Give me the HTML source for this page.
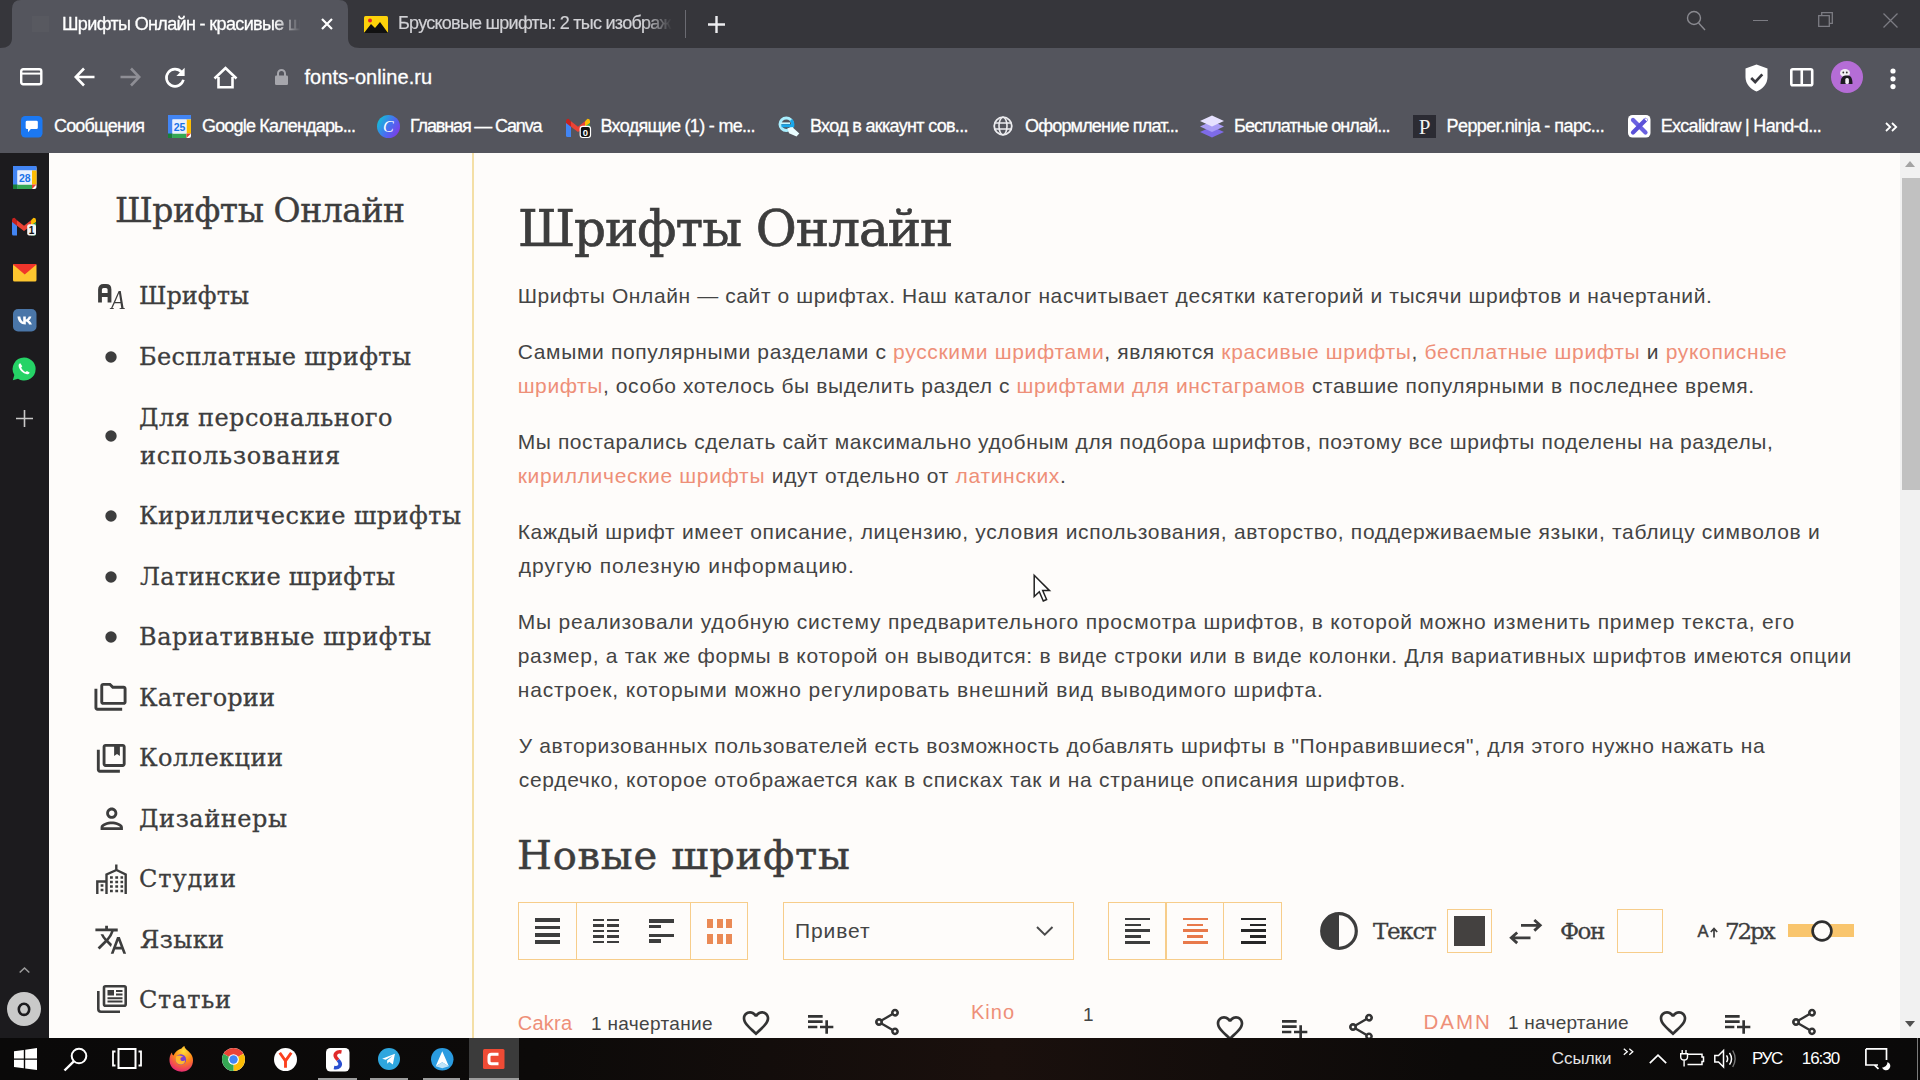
<!DOCTYPE html>
<html lang="ru"><head><meta charset="utf-8"><title>Шрифты Онлайн</title>
<style>
html,body{margin:0;padding:0;}
body{width:1920px;height:1080px;overflow:hidden;position:relative;background:#fefcfa;font-family:"Liberation Sans",sans-serif;}
.a{position:absolute;}
.t{position:absolute;white-space:nowrap;line-height:1.2;}
.t a{color:#ee8f78;text-decoration:none;}
.bm{display:inline-block;width:0;height:0;}
svg{position:absolute;overflow:visible;}

</style></head>
<body>
<!-- ===== browser chrome ===== -->
<div class="a" style="left:0px;top:0px;width:1920px;height:48px;background:#36363b;"></div>
<svg style="left:0px;top:0px;" width="362" height="48" viewBox="0 0 362 48"><path fill="#54555d" d="M0 48 Q12 48 12 38 L12 9 Q12 0 21 0 L339 0 Q348 0 348 9 L348 38 Q348 48 360 48 Z"/></svg>
<div class="a" style="left:32px;top:16px;width:16.5px;height:15.5px;background:rgba(255,255,255,0.022);"></div>
<div class="a" style="left:0px;top:48px;width:1920px;height:105px;background:#54555d;"></div>
<svg style="left:321px;top:18px;" width="12" height="12" viewBox="0 0 12 12"><path d="M1 1 L11 11 M11 1 L1 11" stroke="#fff" stroke-width="2.2" fill="none"/></svg>
<svg style="left:364px;top:16px;" width="24" height="17" viewBox="0 0 24 17"><rect width="24" height="17" rx="1.5" fill="#fdd20a"/><path d="M0 17 L7 8 L11 12 L16 6 L24 17 Z" fill="#111"/><circle cx="6" cy="4.5" r="2" fill="#e8222b"/></svg>
<div class="a" style="left:684.5px;top:10px;width:1.5px;height:28px;background:#6b6b72;"></div>
<svg style="left:708px;top:16px;" width="17" height="17" viewBox="0 0 17 17"><path d="M8.500 0 V17 M0 8.500 H17" stroke="#ededf0" stroke-width="2.4" fill="none"/></svg>
<svg style="left:1685px;top:9px;" width="22" height="24" viewBox="0 0 22 24"><circle cx="9" cy="9" r="6.500" stroke="#8a8a90" stroke-width="1.400" fill="none"/><path d="M13.600 14 L20 21" stroke="#8a8a90" stroke-width="1.400"/></svg>
<div class="a" style="left:1753px;top:19.5px;width:15px;height:1.5px;background:#7c7c83;"></div>
<svg style="left:1818px;top:12px;" width="15" height="15" viewBox="0 0 15 15"><path d="M0.700 3.700 H11.300 V14.300 H0.700 Z M3.700 3.700 V0.700 H14.300 V11.300 H11.300" stroke="#7c7c83" stroke-width="1.300" fill="none"/></svg>
<svg style="left:1882.5px;top:12.5px;" width="15" height="15" viewBox="0 0 15 15"><path d="M0.500 0.500 L14.500 14.500 M14.500 0.500 L0.500 14.500" stroke="#7c7c83" stroke-width="1.300" fill="none"/></svg>
<svg style="left:20px;top:67.5px;" width="22.5" height="17.5" viewBox="0 0 22.5 17.5"><rect x="1.200" y="1.200" width="20.100" height="15.100" rx="2" stroke="#fff" stroke-width="2.400" fill="none"/><path d="M1.200 5.600 H21.300" stroke="#fff" stroke-width="2"/></svg>
<svg style="left:74px;top:67px;" width="21" height="20" viewBox="0 0 21 20"><path d="M10 1.500 L1.800 10 L10 18.500 M2.500 10 H20.500" stroke="#fff" stroke-width="2.600" fill="none"/></svg>
<svg style="left:120px;top:67px;" width="21" height="20" viewBox="0 0 21 20"><path d="M11 1.500 L19.200 10 L11 18.500 M18.500 10 H0.500" stroke="#8e8e95" stroke-width="2.600" fill="none"/></svg>
<svg style="left:164px;top:66.5px;" width="22" height="21" viewBox="0 0 22 21"><path d="M17.600 5.200 A8.600 8.600 0 1 0 19.400 12.800" stroke="#fff" stroke-width="2.600" fill="none"/><path d="M20.600 0.800 V9 H12.400 Z" fill="#fff"/></svg>
<svg style="left:213px;top:66px;" width="25" height="23" viewBox="0 0 25 23"><path d="M1.500 12.500 L12.500 2 L23.500 12.500 M5.500 11 V21.300 H19.500 V11" stroke="#fff" stroke-width="2.600" fill="none" stroke-linejoin="miter"/></svg>
<svg style="left:274.5px;top:69px;" width="13" height="16" viewBox="0 0 13 16"><rect x="0" y="6.500" width="13" height="9.500" rx="1.300" fill="#a6a6ac"/><path d="M3 7 V4.500 A3.500 3.500 0 0 1 10 4.500 V7" stroke="#a6a6ac" stroke-width="2" fill="none"/></svg>
<svg style="left:1745px;top:64px;" width="23" height="28" viewBox="0 0 23 28"><path d="M11.500 0.500 L22.500 4.500 V13 C22.500 20 17.500 25.200 11.500 27.500 C5.500 25.200 0.500 20 0.500 13 V4.500 Z" fill="#fff"/><path d="M6.200 14 L10.200 18 L17.300 10.300" stroke="#3a3a40" stroke-width="2.600" fill="none"/></svg>
<svg style="left:1790px;top:67.5px;" width="23.5" height="18.5" viewBox="0 0 23.5 18.5"><rect x="1.300" y="1.300" width="20.900" height="15.900" rx="1.500" stroke="#fff" stroke-width="2.600" fill="none"/><path d="M11.750 1 V17.500" stroke="#fff" stroke-width="2.600"/></svg>
<svg style="left:1831px;top:61px;" width="32" height="32" viewBox="0 0 32 32"><circle cx="16" cy="16" r="16" fill="#b56dd6"/><ellipse cx="14" cy="12" rx="5" ry="4" fill="#f3eef5"/><path d="M9.500 23 C9.500 16 12 14.500 16 14.500 C20 14.500 21.500 17 21.500 23 Z" fill="#1d1b22"/><rect x="14.300" y="17" width="3.600" height="6" rx="1.500" fill="#f3eef5"/><circle cx="12.300" cy="11.500" r="0.900" fill="#333"/><circle cx="15.800" cy="11.500" r="0.900" fill="#333"/></svg>
<svg style="left:1889.5px;top:67.5px;" width="6" height="22" viewBox="0 0 6 22"><circle cx="3" cy="3" r="2.600" fill="#fff"/><circle cx="3" cy="10.800" r="2.600" fill="#fff"/><circle cx="3" cy="18.600" r="2.600" fill="#fff"/></svg>
<svg style="left:20.5px;top:115.5px;" width="21.5" height="21.5" viewBox="0 0 23 23"><rect width="23" height="23" rx="4.500" fill="#1b78f2"/><path d="M5 6.500 Q5 5 6.500 5 H16.500 Q18 5 18 6.500 V12.500 Q18 14 16.500 14 H10.500 L7.500 17.500 V14 H6.500 Q5 14 5 12.500 Z" fill="#fff"/></svg>
<svg style="left:167.5px;top:115px;" width="23" height="23" viewBox="0 0 23 23"><rect width="23" height="23" rx="2" fill="#fff"/><rect width="23" height="4.500" fill="#4285f4"/><rect width="4.500" height="23" fill="#4285f4"/><rect x="18.500" y="4.500" width="4.500" height="14" fill="#fbbc04"/><rect x="4.500" y="18.500" width="14" height="4.500" fill="#34a853"/><rect x="0" y="18.500" width="4.500" height="4.500" fill="#188038"/><path d="M18.500 18.500 H23 L18.500 23 Z" fill="#ea4335"/><rect x="4.500" y="4.500" width="14" height="14" fill="#e8f0fe"/><text x="11.500" y="15.500" font-size="10.500" font-weight="700" text-anchor="middle" fill="#1a73e8" font-family="Liberation Sans, sans-serif">25</text></svg>
<svg style="left:377px;top:114.500px" width="23" height="23" viewBox="0 0 23 23"><defs><linearGradient id="cv" x1="0" y1="0.200" x2="1" y2="0.800"><stop offset="0" stop-color="#0fc4d6"/><stop offset="0.550" stop-color="#4a6cf0"/><stop offset="1" stop-color="#8436e8"/></linearGradient></defs><circle cx="11.500" cy="11.500" r="11.500" fill="url(#cv)"/><text x="11.300" y="17" font-size="16" font-style="italic" text-anchor="middle" fill="#fff" font-family="Liberation Serif, serif">C</text></svg>
<svg style="left:566px;top:118px;" width="25" height="19.5" viewBox="0 0 25 19.5"><path d="M0 3 V17.500 Q0 19 1.500 19 H5 V8.500 Z" fill="#4285f4"/><path d="M0 3 Q0 0.800 2.500 0.800 L5 3.300 V8.700 L0 5 Z" fill="#c5221f"/><path d="M5 3.300 L12 8.700 L19 3.300 V8.700 L12 14 L5 8.700 Z" fill="#ea4335"/><path d="M19 3.300 L21.500 0.800 Q24 0.800 24 3 V5 L19 8.700 Z" fill="#fbbc04"/><path d="M19 8.700 L24 5 V17.500 Q24 19 22.500 19 H19 Z" fill="#34a853"/><rect x="14.200" y="8.300" width="10.300" height="11.200" rx="2.400" fill="#111" stroke="#fff" stroke-width="1.200"/><text x="19.350" y="17.700" font-size="9.500" font-weight="700" text-anchor="middle" fill="#fff" font-family="Liberation Sans, sans-serif">0</text></svg>
<svg style="left:777px;top:115px;" width="23" height="22" viewBox="0 0 23 22"><circle cx="9.300" cy="9.200" r="6.300" stroke="#a9efff" stroke-width="3" fill="none"/><path d="M4.500 10.800 H15.800 Q16.300 7.500 14 5" stroke="#18a7ea" stroke-width="3" fill="none"/><path d="M3.500 8.200 H13" stroke="#c9f7ff" stroke-width="1.600"/><path d="M10.500 13.300 L15.500 12.300 L22.300 18.500 L19.500 21.500 L12 18.300 Z" fill="#eafdff"/></svg>
<svg style="left:992.5px;top:116px;" width="20" height="20" viewBox="0 0 20 20"><circle cx="10" cy="10" r="8.800" stroke="#ececef" stroke-width="1.800" fill="none"/><ellipse cx="10" cy="10" rx="4" ry="8.800" stroke="#ececef" stroke-width="1.600" fill="none"/><path d="M1.500 7 H18.500 M1.500 13 H18.500" stroke="#ececef" stroke-width="1.600"/></svg>
<svg style="left:1200px;top:115px;" width="24" height="23" viewBox="0 0 24 23"><path d="M12 9.500 L24 15 L12 20.500 L0 15 Z" fill="#7e6be8" transform="translate(0,2)"/><path d="M12 6 L24 11.500 L12 17 L0 11.500 Z" fill="#a99cf5"/><path d="M12 0.500 L24 6 L12 11.500 L0 6 Z" fill="#e6e1ff"/></svg>
<svg style="left:1413px;top:115px;" width="23" height="23" viewBox="0 0 23 23"><rect width="23" height="23" fill="#2b2b33"/><text x="11.500" y="19" font-size="21" text-anchor="middle" fill="#f2f2f2" font-family="Liberation Serif, serif">P</text></svg>
<svg style="left:1627.5px;top:115px;" width="22.5" height="22.5" viewBox="0 0 22.5 22.5"><rect width="22.500" height="22.500" rx="4.500" fill="#fff"/><path d="M5 5 L17.500 17.500" stroke="#6a61e0" stroke-width="4.200" stroke-linecap="round"/><path d="M17.500 5 L5 17.500" stroke="#5a50d8" stroke-width="4.200" stroke-linecap="round"/><path d="M16 3.500 L19 3.500 L19 6.500 Z" fill="#fff"/></svg>
<svg style="left:1885px;top:122px;" width="13" height="10" viewBox="0 0 13 10"><path d="M1 1 L5.200 5 L1 9 M7 1 L11.200 5 L7 9" stroke="#fff" stroke-width="1.800" fill="none"/></svg><!-- ===== page ===== -->
<div class="a" style="left:0px;top:153px;width:49px;height:885px;background:#1c1b1e;"></div>
<div class="a" style="left:49px;top:153px;width:1851px;height:885px;background:#fefcfa;"></div>
<div class="a" style="left:472px;top:153px;width:1.5px;height:885px;background:#f4dfa6;"></div>
<div class="a" style="left:1900px;top:153px;width:20px;height:885px;background:#f1f1f1;"></div>
<div class="a" style="left:1902px;top:177.5px;width:18px;height:312px;background:#c1c1c1;"></div>
<svg style="left:1905px;top:161px;" width="10" height="6" viewBox="0 0 10 6"><path d="M0 6 L5 0 L10 6 Z" fill="#a3a3a3"/></svg>
<svg style="left:1905px;top:1021px;" width="10" height="6" viewBox="0 0 10 6"><path d="M0 0 L5 6 L10 0 Z" fill="#505050"/></svg>
<svg style="left:12.5px;top:166px;" width="23.5" height="23" viewBox="0 0 23.5 23"><rect width="23.500" height="23" rx="2" fill="#fff"/><rect width="23.500" height="4.500" fill="#4285f4"/><rect width="4.500" height="23" fill="#4285f4"/><rect x="19" y="4.500" width="4.500" height="14" fill="#fbbc04"/><rect x="4.500" y="18.500" width="14.500" height="4.500" fill="#34a853"/><rect y="18.500" width="4.500" height="4.500" fill="#188038"/><path d="M19 18.500 H23.500 L19 23 Z" fill="#ea4335"/><rect x="4.500" y="4.500" width="14.500" height="14" fill="#e8f0fe"/><text x="11.750" y="15.500" font-size="10.500" font-weight="700" text-anchor="middle" fill="#1a73e8" font-family="Liberation Sans, sans-serif">28</text></svg>
<svg style="left:12px;top:216.5px;" width="24" height="18.5" viewBox="0 0 24 18.5"><path d="M0 3 V17 Q0 18.500 1.500 18.500 H5 V8.500 Z" fill="#4285f4"/><path d="M0 3 Q0 0.800 2.500 0.800 L5 3.300 V8.700 L0 5 Z" fill="#c5221f"/><path d="M5 3.300 L12 8.700 L19 3.300 V8.700 L12 14 L5 8.700 Z" fill="#ea4335"/><path d="M19 3.300 L21.500 0.800 Q24 0.800 24 3 V5 L19 8.700 Z" fill="#fbbc04"/><path d="M19 8.700 L24 5 V17 Q24 18.500 22.500 18.500 H19 Z" fill="#34a853"/><rect x="15.200" y="7.300" width="8.800" height="11.200" rx="2" fill="#f4f4f4"/><text x="19.600" y="16.700" font-size="10" font-weight="700" text-anchor="middle" fill="#111" font-family="Liberation Sans, sans-serif">1</text></svg>
<svg style="left:12.5px;top:264px;" width="23.5" height="17.5" viewBox="0 0 23.5 17.5"><rect width="23.500" height="17.500" rx="1.500" fill="#fdc62f"/><path d="M0 0.500 L11.750 10.500 L23.500 0.500 V0 H0 Z" fill="#f0352b"/></svg>
<svg style="left:12.5px;top:309px;" width="23.5" height="22.5" viewBox="0 0 23.5 22.5"><rect width="23.500" height="22.500" rx="5" fill="#4a76a8"/><path d="M4.500 7.500 H7.300 C7.600 10.500 9 12.300 10.200 12.700 V7.500 H12.800 V10.600 C14 10.400 15.300 9 15.800 7.500 H18.400 C18 9.400 16.600 11 15.700 11.600 C16.600 12.100 18.200 13.400 18.900 15.500 H16 C15.500 14 14.200 12.800 12.800 12.600 V15.500 H12.400 C7.800 15.500 4.800 12.400 4.500 7.500 Z" fill="#fff"/></svg>
<svg style="left:12px;top:357px;" width="24" height="24" viewBox="0 0 24 24"><path d="M12 0.500 A11.500 11.500 0 1 1 6 21.700 L0.800 23.200 L2.300 18 A11.500 11.500 0 0 1 12 0.500 Z" fill="#25d366"/><path d="M8.300 6.300 C7.500 6.300 6.500 7.300 6.600 8.800 C6.800 12.500 11 16.800 15 17.200 C16.300 17.300 17.500 16.300 17.600 15.400 L14.900 13.900 L13.700 15 C12 14.400 9.800 12.200 9.200 10.400 L10.300 9.300 Z" fill="#fff"/></svg>
<svg style="left:15.5px;top:409.5px;" width="17" height="17" viewBox="0 0 17 17"><path d="M8.500 0 V17 M0 8.500 H17" stroke="#c9c9c9" stroke-width="1.600" fill="none"/></svg>
<svg style="left:18.5px;top:967px;" width="11" height="6" viewBox="0 0 11 6"><path d="M0.700 5.500 L5.500 1 L10.300 5.500" stroke="#9b9b9b" stroke-width="1.600" fill="none"/></svg>
<svg style="left:7px;top:991.5px;" width="34" height="34" viewBox="0 0 34 34"><circle cx="17" cy="17" r="17" fill="#c9c9c9"/><ellipse cx="17" cy="17.300" rx="5.200" ry="5.600" stroke="#1c1b1e" stroke-width="2.600" fill="none"/></svg>
<svg style="left:98px;top:284px;" width="13.5" height="18.5" viewBox="0 0 13.5 18.5"><path d="M2 18.500 V5.500 Q2 2 5.500 2 H8 Q11.500 2 11.500 5.500 V18.500 M2 11 H11.500" stroke="#3d3d3d" stroke-width="3.800" fill="none"/></svg>
<svg style="left:105px;top:351px;" width="12" height="12" viewBox="0 0 12 12"><circle cx="6" cy="6" r="5.700" fill="#3d3d3d"/></svg>
<svg style="left:105px;top:430px;" width="12" height="12" viewBox="0 0 12 12"><circle cx="6" cy="6" r="5.700" fill="#3d3d3d"/></svg>
<svg style="left:105px;top:510px;" width="12" height="12" viewBox="0 0 12 12"><circle cx="6" cy="6" r="5.700" fill="#3d3d3d"/></svg>
<svg style="left:105px;top:571px;" width="12" height="12" viewBox="0 0 12 12"><circle cx="6" cy="6" r="5.700" fill="#3d3d3d"/></svg>
<svg style="left:105px;top:631px;" width="12" height="12" viewBox="0 0 12 12"><circle cx="6" cy="6" r="5.700" fill="#3d3d3d"/></svg>
<svg style="left:93.3px;top:680.0px;" width="35" height="35" viewBox="0 0 24 24"><path fill="#3d3d3d" d="M3 19h17v2H3c-1.100 0-2-.9-2-2V6h2v13zM23 6v9c0 1.100-.9 2-2 2H7c-1.100 0-2-.9-2-2l.01-11c0-1.100.89-2 1.990-2h5l2 2h7c1.100 0 2 .9 2 2zM7 15h14V6h-7.830l-2-2H7v11z"/></svg>
<svg style="left:93.75px;top:740.75px;" width="34.5" height="34.5" viewBox="0 0 24 24"><path fill="#3d3d3d" d="M4 6H2v14c0 1.100.9 2 2 2h14v-2H4V6zM20 2H8c-1.100 0-2 .9-2 2v12c0 1.100.9 2 2 2h12c1.100 0 2-.9 2-2V4c0-1.100-.9-2-2-2zm0 14H8V4h6v6.500l2-1.500 2 1.500V4h2v12z"/></svg>
<svg style="left:94.95px;top:802.05px;" width="33.5" height="33.5" viewBox="0 0 24 24"><path fill="#3d3d3d" d="M12 6c1.100 0 2 .9 2 2s-.9 2-2 2-2-.9-2-2 .9-2 2-2m0 10c2.700 0 5.800 1.290 6 2H6c.23-.72 3.310-2 6-2m0-12C9.790 4 8 5.790 8 8s1.790 4 4 4 4-1.790 4-4-1.790-4-4-4zm0 10c-2.670 0-8 1.340-8 4v2h16v-2c0-2.660-5.330-4-8-4z"/></svg>
<svg style="left:94.25px;top:922.75px;" width="33.5" height="33.5" viewBox="0 0 24 24"><path fill="#3d3d3d" d="M12.870 15.070l-2.540-2.510.03-.03A17.520 17.520 0 0 0 14.070 6H17V4h-7V2H8v2H1v1.990h11.170C11.500 7.920 10.440 9.750 9 11.350 8.070 10.320 7.300 9.190 6.690 8h-2c.73 1.630 1.730 3.170 2.980 4.560l-5.090 5.020L4 19l5-5 3.110 3.110.76-2.040zM18.500 10h-2L12 22h2l1.120-3h4.750L21 22h2l-4.500-12zm-2.620 7l1.620-4.330L19.120 17h-3.240z"/></svg>
<svg style="left:96px;top:864px;" width="31" height="31" viewBox="0 0 31 31"><path d="M1.300 30 V17.500 H10.500 V30 M10.500 30 V10.500 L20.500 6 L29.700 10.500 V30 M20.300 6 V0.500" stroke="#3d3d3d" stroke-width="2.400" fill="none"/><path d="M4.600 21.500 h2.800 M4.600 26 h2.800 M14 13.500 h2.800 M14 18 h2.800 M14 22.500 h2.800 M14 27 h2.800 M19.300 13.500 h2.800 M19.300 18 h2.800 M19.300 22.500 h2.800 M19.300 27 h2.800 M24.500 13.500 h2.600 M24.500 18 h2.600 M24.500 22.500 h2.600 M24.500 27 h2.600" stroke="#3d3d3d" stroke-width="2.400"/></svg>
<svg style="left:97px;top:985px;" width="30" height="28" viewBox="0 0 30 28"><path d="M1.300 6 V24 Q1.300 26.700 4 26.700 H23" stroke="#3d3d3d" stroke-width="2.600" fill="none"/><rect x="7" y="1.300" width="21.700" height="19.400" rx="1.500" stroke="#3d3d3d" stroke-width="2.600" fill="none"/><rect x="10.500" y="5" width="6.500" height="5.500" fill="#3d3d3d"/><path d="M19 6 H25.500 M19 9.500 H25.500 M10.500 13.200 H25.500 M10.500 16.600 H25.500" stroke="#3d3d3d" stroke-width="2"/></svg>
<div class="a" style="left:517.5px;top:901.5px;width:230.5px;height:58px;border:1.4px solid #f7cd8a;box-sizing:border-box"></div>
<div class="a" style="left:575.5px;top:902px;width:1.4px;height:57px;background:#f7cd8a;"></div>
<div class="a" style="left:689.5px;top:902px;width:1.4px;height:57px;background:#f7cd8a;"></div>
<div class="a" style="left:535px;top:918px;width:25px;height:3.5px;background:#3d3d3d;"></div>
<div class="a" style="left:535px;top:925.5px;width:25px;height:3.5px;background:#3d3d3d;"></div>
<div class="a" style="left:535px;top:933px;width:25px;height:3.5px;background:#3d3d3d;"></div>
<div class="a" style="left:535px;top:940.3px;width:25px;height:3.5px;background:#3d3d3d;"></div>
<div class="a" style="left:592.5px;top:918.6px;width:11.5px;height:2.6px;background:#3d3d3d;"></div>
<div class="a" style="left:607px;top:918.6px;width:11.5px;height:2.6px;background:#3d3d3d;"></div>
<div class="a" style="left:592.5px;top:924px;width:11.5px;height:2.6px;background:#3d3d3d;"></div>
<div class="a" style="left:607px;top:924px;width:11.5px;height:2.6px;background:#3d3d3d;"></div>
<div class="a" style="left:592.5px;top:929.6px;width:11.5px;height:2.6px;background:#3d3d3d;"></div>
<div class="a" style="left:607px;top:929.6px;width:11.5px;height:2.6px;background:#3d3d3d;"></div>
<div class="a" style="left:592.5px;top:935.2px;width:11.5px;height:2.6px;background:#3d3d3d;"></div>
<div class="a" style="left:607px;top:935.2px;width:11.5px;height:2.6px;background:#3d3d3d;"></div>
<div class="a" style="left:592.5px;top:940.8px;width:11.5px;height:2.6px;background:#3d3d3d;"></div>
<div class="a" style="left:607px;top:940.8px;width:11.5px;height:2.6px;background:#3d3d3d;"></div>
<div class="a" style="left:649px;top:919.2px;width:25px;height:3.7px;background:#3d3d3d;"></div>
<div class="a" style="left:649px;top:924.9px;width:12.3px;height:3.5px;background:#3d3d3d;"></div>
<div class="a" style="left:649px;top:933.6px;width:25px;height:3.6px;background:#3d3d3d;"></div>
<div class="a" style="left:649px;top:939.3px;width:12.3px;height:3.5px;background:#3d3d3d;"></div>
<div class="a" style="left:707px;top:918.6px;width:6px;height:9.5px;background:#ea8a55;"></div>
<div class="a" style="left:707px;top:933.6px;width:6px;height:10px;background:#ea8a55;"></div>
<div class="a" style="left:716.5px;top:918.6px;width:6px;height:9.5px;background:#ea8a55;"></div>
<div class="a" style="left:716.5px;top:933.6px;width:6px;height:10px;background:#ea8a55;"></div>
<div class="a" style="left:726px;top:918.6px;width:6px;height:9.5px;background:#ea8a55;"></div>
<div class="a" style="left:726px;top:933.6px;width:6px;height:10px;background:#ea8a55;"></div>
<div class="a" style="left:782.5px;top:901.5px;width:291px;height:58px;border:1.4px solid #f7cd8a;box-sizing:border-box"></div>
<svg style="left:1036px;top:926px;" width="17.5" height="10" viewBox="0 0 17.5 10"><path d="M1 1 L8.750 8.600 L16.500 1" stroke="#4a4a4a" stroke-width="2" fill="none"/></svg>
<div class="a" style="left:1107.5px;top:901.5px;width:174.5px;height:58px;border:1.4px solid #f7cd8a;box-sizing:border-box"></div>
<div class="a" style="left:1165.3px;top:902px;width:1.4px;height:57px;background:#f7cd8a;"></div>
<div class="a" style="left:1223px;top:902px;width:1.4px;height:57px;background:#f7cd8a;"></div>
<div class="a" style="left:1124.8px;top:917.6px;width:25px;height:2.5px;background:#3d3d3d;"></div>
<div class="a" style="left:1182.5px;top:917.6px;width:25px;height:2.5px;background:#e8794a;"></div>
<div class="a" style="left:1240.5px;top:917.6px;width:25px;height:2.5px;background:#262626;"></div>
<div class="a" style="left:1124.8px;top:923.5px;width:16px;height:2.5px;background:#3d3d3d;"></div>
<div class="a" style="left:1187.0px;top:923.5px;width:16px;height:2.5px;background:#e8794a;"></div>
<div class="a" style="left:1249.5px;top:923.5px;width:16px;height:2.5px;background:#262626;"></div>
<div class="a" style="left:1124.8px;top:929.4px;width:25px;height:2.5px;background:#3d3d3d;"></div>
<div class="a" style="left:1182.5px;top:929.4px;width:25px;height:2.5px;background:#e8794a;"></div>
<div class="a" style="left:1240.5px;top:929.4px;width:25px;height:2.5px;background:#262626;"></div>
<div class="a" style="left:1124.8px;top:935.2px;width:16px;height:2.5px;background:#3d3d3d;"></div>
<div class="a" style="left:1187.0px;top:935.2px;width:16px;height:2.5px;background:#e8794a;"></div>
<div class="a" style="left:1249.5px;top:935.2px;width:16px;height:2.5px;background:#262626;"></div>
<div class="a" style="left:1124.8px;top:941px;width:25px;height:2.5px;background:#3d3d3d;"></div>
<div class="a" style="left:1182.5px;top:941px;width:25px;height:2.5px;background:#e8794a;"></div>
<div class="a" style="left:1240.5px;top:941px;width:25px;height:2.5px;background:#262626;"></div>
<svg style="left:1319.5px;top:911.8px;" width="38" height="38" viewBox="0 0 38 38"><circle cx="19" cy="19" r="17.300" stroke="#3d3d3d" stroke-width="3.200" fill="none"/><path d="M19 1.700 A17.300 17.300 0 0 0 19 36.300 Z" fill="#3d3d3d"/></svg>
<div class="a" style="left:1447px;top:908.5px;width:44.8px;height:44.5px;border:1.4px solid #f7cd8a;box-sizing:border-box"></div>
<div class="a" style="left:1454.3px;top:915.7px;width:30.5px;height:30.5px;background:#444140;"></div>
<svg style="left:1509px;top:918.5px;" width="33.5" height="25.5" viewBox="0 0 33.5 25.5"><path d="M12 6.300 H31 M25.300 1 L31.200 6.300 L25.300 11.600" stroke="#3d3d3d" stroke-width="2.800" fill="none"/><path d="M21.500 18.800 H2.500 M8.200 13.500 L2.300 18.800 L8.200 24.100" stroke="#3d3d3d" stroke-width="2.800" fill="none"/></svg>
<div class="a" style="left:1617px;top:908.5px;width:45.5px;height:44.5px;border:1.4px solid #f7cd8a;box-sizing:border-box"></div>
<svg style="left:1710px;top:927px;" width="8" height="11" viewBox="0 0 8 11"><path d="M4 10.500 V1.500 M0.800 5 L4 1.500 L7.200 5" stroke="#3d3d3d" stroke-width="1.700" fill="none"/></svg>
<div class="a" style="left:1788px;top:924.3px;width:65.5px;height:12.4px;background:#f9c56d;"></div>
<svg style="left:1811px;top:919.7px;" width="22" height="22" viewBox="0 0 22 22"><circle cx="11" cy="11" r="9.400" fill="#fefcfa" stroke="#2e2e2e" stroke-width="2.700"/></svg>
<svg style="left:740.0px;top:1006.5px;" width="32" height="32" viewBox="0 0 24 24"><path fill="#333" d="M16.500 3c-1.740 0-3.410.81-4.500 2.090C10.910 3.810 9.240 3 7.500 3 4.420 3 2 5.420 2 8.500c0 3.780 3.400 6.860 8.550 11.540L12 21.350l1.450-1.320C18.600 15.360 22 12.280 22 8.500 22 5.420 19.580 3 16.500 3zm-4.400 15.550l-.1.100-.1-.1C7.140 14.240 4 11.390 4 8.500 4 6.500 5.500 5 7.500 5c1.540 0 3.040.99 3.570 2.360h1.870C13.460 5.990 14.960 5 16.500 5c2 0 3.500 1.500 3.500 3.500 0 2.890-3.140 5.740-7.900 10.050z"/></svg>
<svg style="left:804.4px;top:1006.5px;" width="32" height="32" viewBox="0 0 24 24"><path fill="#333" d="M14 10H3v2h11v-2zm0-4H3v2h11V6zm4 8v-4h-2v4h-4v2h4v4h2v-4h4v-2h-4zM3 16h7v-2H3v2z"/></svg>
<svg style="left:871.2px;top:1006.0px;" width="32" height="32" viewBox="0 0 24 24"><path fill="#333" d="M18 16.080c-.76 0-1.440.3-1.960.77L8.910 12.700c.05-.23.090-.46.090-.7s-.04-.47-.09-.7l7.050-4.110c.54.5 1.250.81 2.040.81 1.660 0 3-1.340 3-3s-1.340-3-3-3-3 1.340-3 3c0 .24.04.47.09.7L8.040 9.810C7.500 9.310 6.790 9 6 9c-1.660 0-3 1.340-3 3s1.340 3 3 3c.79 0 1.500-.31 2.040-.81l7.120 4.160c-.05.21-.08.43-.08.650 0 1.610 1.310 2.920 2.920 2.920s2.920-1.310 2.920-2.920c0-1.610-1.310-2.920-2.920-2.920zM18 4c.55 0 1 .45 1 1s-.45 1-1 1-1-.45-1-1 .45-1 1-1zM6 13c-.55 0-1-.45-1-1s.45-1 1-1 1 .45 1 1-.45 1-1 1zm12 7.020c-.55 0-1-.45-1-1s.45-1 1-1 1 .45 1 1-.45 1-1 1z"/></svg>
<svg style="left:1214.0px;top:1011.5px;" width="32" height="32" viewBox="0 0 24 24"><path fill="#333" d="M16.500 3c-1.740 0-3.410.81-4.500 2.090C10.910 3.810 9.240 3 7.500 3 4.420 3 2 5.420 2 8.500c0 3.780 3.400 6.860 8.550 11.540L12 21.350l1.450-1.320C18.600 15.360 22 12.280 22 8.500 22 5.420 19.580 3 16.500 3zm-4.400 15.550l-.1.100-.1-.1C7.140 14.240 4 11.390 4 8.500 4 6.500 5.500 5 7.500 5c1.540 0 3.040.99 3.570 2.360h1.870C13.460 5.990 14.960 5 16.500 5c2 0 3.500 1.500 3.500 3.500 0 2.890-3.140 5.740-7.900 10.050z"/></svg>
<svg style="left:1278.4px;top:1011.5px;" width="32" height="32" viewBox="0 0 24 24"><path fill="#333" d="M14 10H3v2h11v-2zm0-4H3v2h11V6zm4 8v-4h-2v4h-4v2h4v4h2v-4h4v-2h-4zM3 16h7v-2H3v2z"/></svg>
<svg style="left:1345.2px;top:1011.0px;" width="32" height="32" viewBox="0 0 24 24"><path fill="#333" d="M18 16.080c-.76 0-1.440.3-1.960.77L8.910 12.700c.05-.23.090-.46.090-.7s-.04-.47-.09-.7l7.050-4.110c.54.5 1.250.81 2.040.81 1.660 0 3-1.340 3-3s-1.340-3-3-3-3 1.340-3 3c0 .24.04.47.09.7L8.040 9.810C7.500 9.310 6.790 9 6 9c-1.660 0-3 1.340-3 3s1.340 3 3 3c.79 0 1.500-.31 2.040-.81l7.120 4.160c-.05.21-.08.43-.08.650 0 1.610 1.310 2.920 2.920 2.920s2.920-1.310 2.920-2.920c0-1.610-1.310-2.920-2.920-2.920zM18 4c.55 0 1 .45 1 1s-.45 1-1 1-1-.45-1-1 .45-1 1-1zM6 13c-.55 0-1-.45-1-1s.45-1 1-1 1 .45 1 1-.45 1-1 1zm12 7.020c-.55 0-1-.45-1-1s.45-1 1-1 1 .45 1 1-.45 1-1 1z"/></svg>
<svg style="left:1656.5px;top:1006.5px;" width="32" height="32" viewBox="0 0 24 24"><path fill="#333" d="M16.500 3c-1.740 0-3.410.81-4.500 2.090C10.910 3.810 9.240 3 7.500 3 4.420 3 2 5.420 2 8.500c0 3.780 3.400 6.860 8.550 11.540L12 21.350l1.450-1.320C18.600 15.360 22 12.280 22 8.500 22 5.420 19.580 3 16.500 3zm-4.400 15.550l-.1.100-.1-.1C7.140 14.240 4 11.390 4 8.500 4 6.500 5.500 5 7.500 5c1.540 0 3.040.99 3.570 2.360h1.870C13.460 5.990 14.960 5 16.500 5c2 0 3.500 1.500 3.500 3.500 0 2.890-3.140 5.740-7.900 10.050z"/></svg>
<svg style="left:1720.9px;top:1006.5px;" width="32" height="32" viewBox="0 0 24 24"><path fill="#333" d="M14 10H3v2h11v-2zm0-4H3v2h11V6zm4 8v-4h-2v4h-4v2h4v4h2v-4h4v-2h-4zM3 16h7v-2H3v2z"/></svg>
<svg style="left:1787.7px;top:1006.0px;" width="32" height="32" viewBox="0 0 24 24"><path fill="#333" d="M18 16.080c-.76 0-1.440.3-1.960.77L8.910 12.700c.05-.23.090-.46.090-.7s-.04-.47-.09-.7l7.050-4.110c.54.5 1.250.81 2.040.81 1.660 0 3-1.340 3-3s-1.340-3-3-3-3 1.340-3 3c0 .24.04.47.09.7L8.040 9.810C7.500 9.310 6.790 9 6 9c-1.660 0-3 1.340-3 3s1.340 3 3 3c.79 0 1.500-.31 2.040-.81l7.120 4.160c-.05.21-.08.43-.08.650 0 1.610 1.310 2.920 2.920 2.920s2.920-1.310 2.920-2.920c0-1.610-1.310-2.920-2.920-2.920zM18 4c.55 0 1 .45 1 1s-.45 1-1 1-1-.45-1-1 .45-1 1-1zM6 13c-.55 0-1-.45-1-1s.45-1 1-1 1 .45 1 1-.45 1-1 1zm12 7.020c-.55 0-1-.45-1-1s.45-1 1-1 1 .45 1 1-.45 1-1 1z"/></svg>
<svg style="left:1033px;top:574px;" width="19" height="29" viewBox="0 0 19 29"><path d="M1.200 1.200 V22.500 L6.300 17.800 L10.300 27 L13.600 25.500 L9.700 16.600 H16.500 Z" fill="#fff" stroke="#222" stroke-width="1.500" stroke-linejoin="miter"/></svg>
<div class="t" style="font-family:'DejaVu Serif', 'Liberation Serif', serif;font-size:50px;color:#3d3d3d;font-weight:400;left:518.0px;top:198.5px;letter-spacing:-1.007px;-webkit-text-stroke:0.7px #3d3d3d;">Шрифты Онлайн</div>
<div class="t" style="font-family:'Liberation Sans', sans-serif;font-size:21px;color:#444;font-weight:400;left:517.7px;top:282.5px;letter-spacing:0.603px;">Шрифты Онлайн — сайт о шрифтах. Наш каталог насчитывает десятки категорий и тысячи шрифтов и начертаний.</div>
<div class="t" style="font-family:'Liberation Sans', sans-serif;font-size:21px;color:#444;font-weight:400;left:517.7px;top:338.5px;letter-spacing:0.663px;">Самыми популярными разделами с <a>русскими шрифтами</a>, являются <a>красивые шрифты</a>, <a>бесплатные шрифты</a> и <a>рукописные</a></div>
<div class="t" style="font-family:'Liberation Sans', sans-serif;font-size:21px;color:#444;font-weight:400;left:517.7px;top:372.5px;letter-spacing:0.584px;"><a>шрифты</a>, особо хотелось бы выделить раздел с <a>шрифтами для инстаграмов</a> ставшие популярными в последнее время.</div>
<div class="t" style="font-family:'Liberation Sans', sans-serif;font-size:21px;color:#444;font-weight:400;left:517.7px;top:428.5px;letter-spacing:0.590px;">Мы постарались сделать сайт максимально удобным для подбора шрифтов, поэтому все шрифты поделены на разделы,</div>
<div class="t" style="font-family:'Liberation Sans', sans-serif;font-size:21px;color:#444;font-weight:400;left:517.7px;top:462.5px;letter-spacing:0.680px;"><a>кириллические шрифты</a> идут отдельно от <a>латинских</a>.</div>
<div class="t" style="font-family:'Liberation Sans', sans-serif;font-size:21px;color:#444;font-weight:400;left:517.7px;top:518.5px;letter-spacing:0.677px;">Каждый шрифт имеет описание, лицензию, условия использования, авторство, поддерживаемые языки, таблицу символов и</div>
<div class="t" style="font-family:'Liberation Sans', sans-serif;font-size:21px;color:#444;font-weight:400;left:518.7px;top:552.5px;letter-spacing:1.015px;">другую полезную информацию.</div>
<div class="t" style="font-family:'Liberation Sans', sans-serif;font-size:21px;color:#444;font-weight:400;left:517.7px;top:608.5px;letter-spacing:0.807px;">Мы реализовали удобную систему предварительного просмотра шрифтов, в которой можно изменить пример текста, его</div>
<div class="t" style="font-family:'Liberation Sans', sans-serif;font-size:21px;color:#444;font-weight:400;left:517.7px;top:642.5px;letter-spacing:0.732px;">размер, а так же формы в которой он выводится: в виде строки или в виде колонки. Для вариативных шрифтов имеются опции</div>
<div class="t" style="font-family:'Liberation Sans', sans-serif;font-size:21px;color:#444;font-weight:400;left:517.7px;top:676.5px;letter-spacing:0.882px;">настроек, которыми можно регулировать внешний вид выводимого шрифта.</div>
<div class="t" style="font-family:'Liberation Sans', sans-serif;font-size:21px;color:#444;font-weight:400;left:518.7px;top:732.5px;letter-spacing:0.664px;">У авторизованных пользователей есть возможность добавлять шрифты в "Понравившиеся", для этого нужно нажать на</div>
<div class="t" style="font-family:'Liberation Sans', sans-serif;font-size:21px;color:#444;font-weight:400;left:518.7px;top:766.5px;letter-spacing:0.705px;">сердечко, которое отображается как в списках так и на странице описания шрифтов.</div>
<div class="t" style="font-family:'DejaVu Serif', 'Liberation Serif', serif;font-size:40px;color:#3d3d3d;font-weight:400;left:517.0px;top:831.0px;letter-spacing:0.764px;-webkit-text-stroke:0.55px #3d3d3d;">Новые шрифты</div>
<div class="t" style="font-family:'DejaVu Serif', 'Liberation Serif', serif;font-size:33px;color:#3d3d3d;font-weight:400;left:115.0px;top:191.0px;letter-spacing:-0.441px;-webkit-text-stroke:0.4px #3d3d3d;">Шрифты Онлайн</div>
<div class="t" style="font-family:'DejaVu Serif', 'Liberation Serif', serif;font-size:24px;color:#3d3d3d;font-weight:400;left:139.0px;top:282.4px;letter-spacing:0.038px;-webkit-text-stroke:0.3px #3d3d3d;">Шрифты</div>
<div class="t" style="font-family:'DejaVu Serif', 'Liberation Serif', serif;font-size:24px;color:#3d3d3d;font-weight:400;left:139.0px;top:343.0px;letter-spacing:0.389px;-webkit-text-stroke:0.3px #3d3d3d;">Бесплатные шрифты</div>
<div class="t" style="font-family:'DejaVu Serif', 'Liberation Serif', serif;font-size:24px;color:#3d3d3d;font-weight:400;left:139.0px;top:403.5px;letter-spacing:0.399px;-webkit-text-stroke:0.3px #3d3d3d;">Для персонального</div>
<div class="t" style="font-family:'DejaVu Serif', 'Liberation Serif', serif;font-size:24px;color:#3d3d3d;font-weight:400;left:140.0px;top:441.5px;letter-spacing:0.788px;-webkit-text-stroke:0.3px #3d3d3d;">использования</div>
<div class="t" style="font-family:'DejaVu Serif', 'Liberation Serif', serif;font-size:24px;color:#3d3d3d;font-weight:400;left:139.0px;top:502.0px;letter-spacing:0.448px;-webkit-text-stroke:0.3px #3d3d3d;">Кириллические шрифты</div>
<div class="t" style="font-family:'DejaVu Serif', 'Liberation Serif', serif;font-size:24px;color:#3d3d3d;font-weight:400;left:140.0px;top:562.5px;letter-spacing:0.293px;-webkit-text-stroke:0.3px #3d3d3d;">Латинские шрифты</div>
<div class="t" style="font-family:'DejaVu Serif', 'Liberation Serif', serif;font-size:24px;color:#3d3d3d;font-weight:400;left:139.0px;top:623.0px;letter-spacing:0.585px;-webkit-text-stroke:0.3px #3d3d3d;">Вариативные шрифты</div>
<div class="t" style="font-family:'DejaVu Serif', 'Liberation Serif', serif;font-size:24px;color:#3d3d3d;font-weight:400;left:139.0px;top:683.5px;letter-spacing:0.157px;-webkit-text-stroke:0.3px #3d3d3d;">Категории</div>
<div class="t" style="font-family:'DejaVu Serif', 'Liberation Serif', serif;font-size:24px;color:#3d3d3d;font-weight:400;left:139.0px;top:744.0px;letter-spacing:0.481px;-webkit-text-stroke:0.3px #3d3d3d;">Коллекции</div>
<div class="t" style="font-family:'DejaVu Serif', 'Liberation Serif', serif;font-size:24px;color:#3d3d3d;font-weight:400;left:139.0px;top:804.5px;letter-spacing:0.567px;-webkit-text-stroke:0.3px #3d3d3d;">Дизайнеры</div>
<div class="t" style="font-family:'DejaVu Serif', 'Liberation Serif', serif;font-size:24px;color:#3d3d3d;font-weight:400;left:139.0px;top:865.0px;letter-spacing:0.893px;-webkit-text-stroke:0.3px #3d3d3d;">Студии</div>
<div class="t" style="font-family:'DejaVu Serif', 'Liberation Serif', serif;font-size:24px;color:#3d3d3d;font-weight:400;left:140.0px;top:925.5px;letter-spacing:0.356px;-webkit-text-stroke:0.3px #3d3d3d;">Языки</div>
<div class="t" style="font-family:'DejaVu Serif', 'Liberation Serif', serif;font-size:24px;color:#3d3d3d;font-weight:400;left:139.0px;top:986.0px;letter-spacing:0.741px;-webkit-text-stroke:0.3px #3d3d3d;">Статьи</div>
<div class="t" style="font-family:'Liberation Sans', sans-serif;font-size:18px;color:#fff;font-weight:400;left:62.0px;top:13.6px;letter-spacing:-0.643px;-webkit-text-stroke:0.3px;width:241px;overflow:hidden;-webkit-mask-image:linear-gradient(90deg,#000 88%,transparent 99%);mask-image:linear-gradient(90deg,#000 88%,transparent 99%);">Шрифты Онлайн - красивые ш</div>
<div class="t" style="font-family:'Liberation Sans', sans-serif;font-size:18px;color:#d2d2d6;font-weight:400;left:398.0px;top:13.2px;letter-spacing:-0.742px;-webkit-text-stroke:0.2px;width:274px;overflow:hidden;-webkit-mask-image:linear-gradient(90deg,#000 90%,transparent 100%);mask-image:linear-gradient(90deg,#000 90%,transparent 100%);">Брусковые шрифты: 2 тыс изображ</div>
<div class="t" style="font-family:'Liberation Sans', sans-serif;font-size:20px;color:#fff;font-weight:400;left:304.5px;top:64.6px;letter-spacing:0.063px;-webkit-text-stroke:0.3px;">fonts-online.ru</div>
<div class="t" style="font-family:'Liberation Sans', sans-serif;font-size:18px;color:#fff;font-weight:400;left:54.0px;top:116.4px;letter-spacing:-0.830px;-webkit-text-stroke:0.3px;">Сообщения</div>
<div class="t" style="font-family:'Liberation Sans', sans-serif;font-size:18px;color:#fff;font-weight:400;left:202.0px;top:116.4px;letter-spacing:-0.828px;-webkit-text-stroke:0.3px;">Google Календарь...</div>
<div class="t" style="font-family:'Liberation Sans', sans-serif;font-size:18px;color:#fff;font-weight:400;left:410.0px;top:116.4px;letter-spacing:-1.145px;-webkit-text-stroke:0.3px;">Главная — Canva</div>
<div class="t" style="font-family:'Liberation Sans', sans-serif;font-size:18px;color:#fff;font-weight:400;left:600.5px;top:116.4px;letter-spacing:-0.697px;-webkit-text-stroke:0.3px;">Входящие (1) - me...</div>
<div class="t" style="font-family:'Liberation Sans', sans-serif;font-size:18px;color:#fff;font-weight:400;left:810.0px;top:116.4px;letter-spacing:-0.686px;-webkit-text-stroke:0.3px;">Вход в аккаунт сов...</div>
<div class="t" style="font-family:'Liberation Sans', sans-serif;font-size:18px;color:#fff;font-weight:400;left:1025.0px;top:116.4px;letter-spacing:-0.814px;-webkit-text-stroke:0.3px;">Оформление плат...</div>
<div class="t" style="font-family:'Liberation Sans', sans-serif;font-size:18px;color:#fff;font-weight:400;left:1234.0px;top:116.4px;letter-spacing:-0.880px;-webkit-text-stroke:0.3px;">Бесплатные онлай...</div>
<div class="t" style="font-family:'Liberation Sans', sans-serif;font-size:18px;color:#fff;font-weight:400;left:1446.5px;top:116.4px;letter-spacing:-0.555px;-webkit-text-stroke:0.3px;">Pepper.ninja - парс...</div>
<div class="t" style="font-family:'Liberation Sans', sans-serif;font-size:18px;color:#fff;font-weight:400;left:1660.7px;top:116.4px;letter-spacing:-0.697px;-webkit-text-stroke:0.3px;">Excalidraw | Hand-d...</div>
<div class="t" style="font-family:'Liberation Sans', sans-serif;font-size:21px;color:#444;font-weight:400;left:795.0px;top:917.8px;letter-spacing:0.919px;">Привет</div>
<div class="t" style="font-family:'DejaVu Serif', 'Liberation Serif', serif;font-size:23px;color:#3d3d3d;font-weight:400;left:1373.0px;top:918.0px;letter-spacing:-1.302px;-webkit-text-stroke:0.3px #3d3d3d;">Текст</div>
<div class="t" style="font-family:'DejaVu Serif', 'Liberation Serif', serif;font-size:23px;color:#3d3d3d;font-weight:400;left:1560.0px;top:918.0px;letter-spacing:-1.469px;-webkit-text-stroke:0.3px #3d3d3d;">Фон</div>
<div class="t" style="font-family:'Liberation Sans', sans-serif;font-size:16.5px;color:#3d3d3d;font-weight:400;left:1697.5px;top:922.4px;letter-spacing:0.000px;-webkit-text-stroke:0.5px #3d3d3d;">A</div>
<div class="t" style="font-family:'DejaVu Serif', 'Liberation Serif', serif;font-size:23px;color:#3d3d3d;font-weight:400;left:1725.0px;top:917.7px;letter-spacing:-2.097px;-webkit-text-stroke:0.3px #3d3d3d;">72px</div>
<div class="t" style="font-family:'Liberation Sans', sans-serif;font-size:20px;color:#ee8f78;font-weight:400;left:517.7px;top:1011.0px;letter-spacing:0.268px;">Cakra</div>
<div class="t" style="font-family:'Liberation Sans', sans-serif;font-size:19px;color:#444;font-weight:400;left:591.0px;top:1013.0px;letter-spacing:0.340px;">1 начертание</div>
<div class="t" style="font-family:'Liberation Sans', sans-serif;font-size:20px;color:#ee8f78;font-weight:400;left:971.0px;top:1000.0px;letter-spacing:1.031px;">Kino</div>
<div class="t" style="font-family:'Liberation Sans', sans-serif;font-size:19px;color:#444;font-weight:400;left:1083.0px;top:1004.0px;letter-spacing:0.000px;">1</div>
<div class="t" style="font-family:'Liberation Sans', sans-serif;font-size:20.5px;color:#ee8f78;font-weight:400;left:1423.5px;top:1010.4px;letter-spacing:1.982px;">DAMN</div>
<div class="t" style="font-family:'Liberation Sans', sans-serif;font-size:19px;color:#444;font-weight:400;left:1508.0px;top:1012.4px;letter-spacing:0.249px;">1 начертание</div>
<div class="t" style="font-family:'Liberation Serif',serif;font-size:27px;color:#3d3d3d;font-weight:400;left:110.6px;top:284.3px;letter-spacing:0.000px;font-style:italic;transform:scaleX(0.84);transform-origin:0 0;">A</div>
<div class="t" style="font-family:'Liberation Sans', sans-serif;font-size:17px;color:#e4e4e4;font-weight:400;left:1551.7px;top:1049.0px;letter-spacing:-0.011px;z-index:5;">Ссылки</div>
<div class="t" style="font-family:'Liberation Sans', sans-serif;font-size:17px;color:#fff;font-weight:400;left:1752.0px;top:1049.0px;letter-spacing:-1.382px;z-index:5;">РУС</div>
<div class="t" style="font-family:'Liberation Sans', sans-serif;font-size:17px;color:#fff;font-weight:400;left:1801.7px;top:1049.0px;letter-spacing:-0.997px;z-index:5;">16:30</div>
<!-- ===== taskbar ===== -->
<div class="a" style="left:0px;top:1038px;width:1920px;height:42px;background:linear-gradient(90deg,#0a0909 0%,#0c0a09 28%,#1a100d 52%,#0c0a09 76%,#0a0909 100%);"></div>
<div class="a" style="left:468.5px;top:1038px;width:50.5px;height:42px;background:#3b3b3b;"></div>
<div class="a" style="left:318px;top:1077.5px;width:39px;height:2.5px;background:#9c9c9c;"></div>
<div class="a" style="left:370px;top:1077.5px;width:38px;height:2.5px;background:#9c9c9c;"></div>
<div class="a" style="left:423px;top:1077.5px;width:37px;height:2.5px;background:#9c9c9c;"></div>
<div class="a" style="left:468.5px;top:1077.5px;width:50.5px;height:2.5px;background:#9c9c9c;"></div>
<svg style="left:14px;top:1048px;" width="23" height="22" viewBox="0 0 23 22"><path d="M0 3.200 L9.800 1.900 V10.400 H0 Z M11.200 1.700 L23 0 V10.400 H11.200 Z M0 11.700 H9.800 V20.200 L0 18.900 Z M11.200 11.700 H23 V22 L11.200 20.400 Z" fill="#fff"/></svg>
<svg style="left:63px;top:1046.5px;" width="26" height="25" viewBox="0 0 26 25"><circle cx="16" cy="9" r="7.300" stroke="#fff" stroke-width="2" fill="none"/><path d="M10.800 14.300 L1.500 23.500" stroke="#fff" stroke-width="2.400"/></svg>
<svg style="left:112px;top:1048px;" width="30" height="21" viewBox="0 0 30 21"><rect x="6.500" y="1" width="17" height="19" stroke="#fff" stroke-width="2" fill="none"/><path d="M3.500 3.500 H1 V17.500 H3.500 M26.500 3.500 H29 V17.500 H26.500" stroke="#fff" stroke-width="1.800" fill="none"/></svg>
<svg style="left:169px;top:1046px" width="25" height="26" viewBox="0 0 25 26"><defs><radialGradient id="ff" cx="0.600" cy="0.200" r="0.900"><stop offset="0" stop-color="#ffde3a"/><stop offset="0.450" stop-color="#ff8a16"/><stop offset="1" stop-color="#e31587"/></radialGradient></defs><path d="M12.500 2.500 C14 0.500 15 0.300 15.500 0 C15.500 3 19 4 22 8 C25.500 13 24.500 20.500 19 24 C13.500 27.500 5 25.500 1.800 19.500 C-0.500 15 0.500 9 3 6.500 C3 8 3.500 9 4.500 9.500 C6 6 9 3.500 12.500 2.500 Z" fill="url(#ff)"/><circle cx="11.800" cy="13.500" r="5.300" fill="#7a3fd0"/><path d="M7 10.500 C9.500 8.500 13 9.500 14.500 11 C12.500 10.500 11 12 11.500 13.500 C12 15.500 15 15.500 16 14 C16.500 18 12 20 8.500 17.500 C6.500 16 6 13 7 10.500 Z" fill="#ffb52e"/></svg>
<svg style="left:221.5px;top:1047.5px;" width="23" height="23" viewBox="0 0 24 24"><circle cx="12" cy="12" r="12" fill="#fff"/><path d="M12 12 L1.610 6 A12 12 0 0 1 22.390 6 Z" fill="#ea4335"/><path d="M12 12 L22.390 6 A12 12 0 0 1 12 24 Z" fill="#fbbc05"/><path d="M12 12 L12 24 A12 12 0 0 1 1.610 6 Z" fill="#34a853"/><circle cx="12" cy="12" r="5.600" fill="#fff"/><circle cx="12" cy="12" r="4.400" fill="#4285f4"/></svg>
<svg style="left:274px;top:1047.5px;" width="23" height="23" viewBox="0 0 24 24"><circle cx="12" cy="12" r="12" fill="#fff"/><path d="M6 5 L12 13.500 V20.500 M18 5 L12 13.500" stroke="#fc3f1d" stroke-width="3" fill="none"/></svg>
<svg style="left:326px;top:1047.5px;" width="23.5" height="23.5" viewBox="0 0 23.5 23.5"><rect width="23.500" height="23.500" rx="4.500" fill="#fff"/><path d="M15.500 4 C10.500 3 8 6.500 10 9.500 L12 12" stroke="#e02a2a" stroke-width="3.600" fill="none"/><path d="M12 12 L13.500 14 C15.500 17 13 20.500 8 19.500" stroke="#2a4fd0" stroke-width="3.600" fill="none"/></svg>
<svg style="left:378px;top:1048px;" width="22" height="22" viewBox="0 0 24 24"><circle cx="12" cy="12" r="12" fill="#2ea6de"/><path d="M4.500 11.800 L18.500 6.200 L16.200 18 L12.200 15.100 L10.200 17.200 L9.900 13.700 L16 8.500 L8.400 12.900 Z" fill="#fff"/></svg>
<svg style="left:430.5px;top:1047.5px;" width="22.5" height="22.5" viewBox="0 0 24 24"><circle cx="12" cy="12" r="12" fill="#2a9be0"/><path d="M12 3.500 L19 19.500 L12 15.200 L5 19.500 Z" fill="#fff"/><path d="M12 15.200 L19 19.500 L12 21.500 L5 19.500 Z" fill="#bfe3f7"/></svg>
<svg style="left:482.5px;top:1048.5px;" width="21.5" height="20" viewBox="0 0 21.5 20"><rect width="21.500" height="20" rx="1.500" fill="#ee4b35"/><path d="M15.500 5.200 H8.500 Q6 5.200 6 7.700 V12.300 Q6 14.800 8.500 14.800 H15.500" stroke="#fff" stroke-width="3" fill="none"/></svg>
<svg style="left:1623px;top:1048px;" width="12" height="7.5" viewBox="0 0 12 7.5"><path d="M0.800 0.800 L4.300 3.750 L0.800 6.700 M6.300 0.800 L9.800 3.750 L6.300 6.700" stroke="#fff" stroke-width="1.300" fill="none"/></svg>
<svg style="left:1649px;top:1054px;" width="18" height="10" viewBox="0 0 18 10"><path d="M0.800 9.200 L9 1.200 L17.200 9.200" stroke="#fff" stroke-width="1.700" fill="none"/></svg>
<svg style="left:1680px;top:1049.5px;" width="24" height="17" viewBox="0 0 24 17"><path d="M7.500 4.200 H22 V7 H23.500 V11.500 H22 V14.500 H7.500" stroke="#fff" stroke-width="1.500" fill="none"/><path d="M2.200 0 V3.500 M6 0 V3.500 M0.700 3.700 H7.500 V7 Q7.500 10 4.100 10 Q0.700 10 0.700 7 Z M4.100 10 V16.500" stroke="#fff" stroke-width="1.400" fill="none"/></svg>
<svg style="left:1714px;top:1048.5px;" width="24" height="19.5" viewBox="0 0 24 19.5"><path d="M0.800 6.500 H4.500 L9.500 1.500 V18 L4.500 13 H0.800 Z" stroke="#fff" stroke-width="1.500" fill="none"/><path d="M12.500 6.300 Q14.800 9.750 12.500 13.200 M15.500 3.800 Q19.500 9.750 15.500 15.700" stroke="#fff" stroke-width="1.500" fill="none"/><path d="M18.700 1.500 Q23.500 9.750 18.700 18" stroke="#777" stroke-width="1.400" fill="none"/></svg>
<svg style="left:1865px;top:1048px;" width="23.5" height="22" viewBox="0 0 23.5 22"><path d="M0.900 0.900 H21.500 V12 M13 17 H9.500 L13.500 20.800 M0.900 0.900 V17 H9.500" stroke="#fff" stroke-width="1.700" fill="none"/><path d="M22.500 14 A4.300 4.300 0 1 1 17 19.500 C20 19.500 22.500 17 22.500 14 Z" fill="#fff"/></svg>
<div class="a" style="left:1916.5px;top:1038px;width:1px;height:42px;background:#7a7a7a;"></div>
</body></html>
